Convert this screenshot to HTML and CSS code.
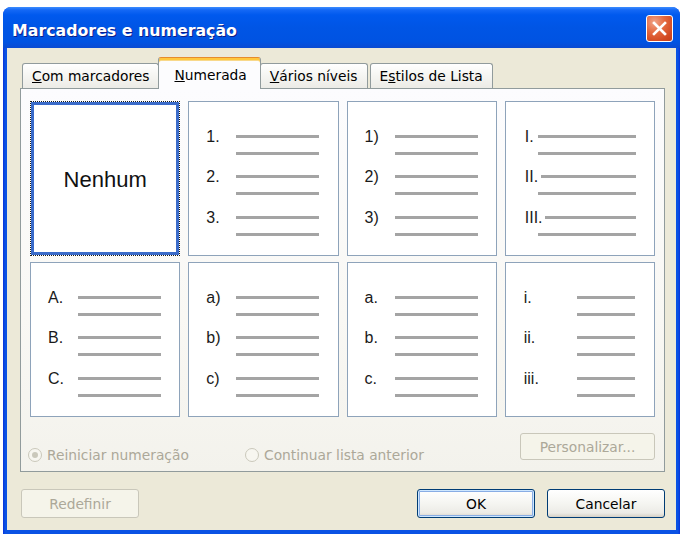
FILE: index.html
```html
<!DOCTYPE html>
<html lang="pt">
<head>
<meta charset="utf-8">
<title>Marcadores e numeração</title>
<link rel="stylesheet" href="styles.css">
</head>
<body>
<div class="window">
  <div class="titlebar">
    <span class="title">Marcadores e numeração</span>
    <div class="close">
      <svg width="25" height="25" viewBox="0 0 25 25"><path d="M7 7 L18 18 M18 7 L7 18" stroke="#fff" stroke-width="2.6" stroke-linecap="square" fill="none"/></svg>
    </div>
  </div>
  <div class="client">
    <div class="tabs">
      <div class="tab"><u>C</u>om marcadores</div>
      <div class="tab active"><u>N</u>umerada</div>
      <div class="tab"><u>V</u>ários níveis</div>
      <div class="tab">E<u>s</u>tilos de Lista</div>
    </div>
    <div class="panel">
      <div class="grid">
        <div class="cell selected"><span class="none">Nenhum</span></div>

        <div class="cell list">
          <div class="item"><span class="num">1.</span><div class="lines"><i></i><i></i></div></div>
          <div class="item"><span class="num">2.</span><div class="lines"><i></i><i></i></div></div>
          <div class="item"><span class="num">3.</span><div class="lines"><i></i><i></i></div></div>
        </div>

        <div class="cell list">
          <div class="item"><span class="num">1)</span><div class="lines"><i></i><i></i></div></div>
          <div class="item"><span class="num">2)</span><div class="lines"><i></i><i></i></div></div>
          <div class="item"><span class="num">3)</span><div class="lines"><i></i><i></i></div></div>
        </div>

        <div class="cell list roman">
          <div class="item"><span class="num">I.</span><div class="lines"><i></i><i></i></div></div>
          <div class="item r2"><span class="num">II.</span><div class="lines"><i></i><i></i></div></div>
          <div class="item r3"><span class="num">III.</span><div class="lines"><i></i><i></i></div></div>
        </div>

        <div class="cell list">
          <div class="item"><span class="num">A.</span><div class="lines"><i></i><i></i></div></div>
          <div class="item"><span class="num">B.</span><div class="lines"><i></i><i></i></div></div>
          <div class="item"><span class="num">C.</span><div class="lines"><i></i><i></i></div></div>
        </div>

        <div class="cell list">
          <div class="item"><span class="num">a)</span><div class="lines"><i></i><i></i></div></div>
          <div class="item"><span class="num">b)</span><div class="lines"><i></i><i></i></div></div>
          <div class="item"><span class="num">c)</span><div class="lines"><i></i><i></i></div></div>
        </div>

        <div class="cell list">
          <div class="item"><span class="num">a.</span><div class="lines"><i></i><i></i></div></div>
          <div class="item"><span class="num">b.</span><div class="lines"><i></i><i></i></div></div>
          <div class="item"><span class="num">c.</span><div class="lines"><i></i><i></i></div></div>
        </div>

        <div class="cell list lroman">
          <div class="item"><span class="num">i.</span><div class="lines"><i></i><i></i></div></div>
          <div class="item"><span class="num">ii.</span><div class="lines"><i></i><i></i></div></div>
          <div class="item"><span class="num">iii.</span><div class="lines"><i></i><i></i></div></div>
        </div>
      </div>

      <div class="options">
        <div class="radio first"><span class="dot checked"></span><span>Reiniciar numeração</span></div>
        <div class="radio"><span class="dot"></span><span>Continuar lista anterior</span></div>
        <div class="btn disabled custom">Personalizar...</div>
      </div>
    </div>

    <div class="footer">
      <div class="btn disabled">Redefinir</div>
      <div class="spacer"></div>
      <div class="btn default">OK</div>
      <div class="btn">Cancelar</div>
    </div>
  </div>
</div>
</body>
</html>
```

FILE: styles.css
```css
* { box-sizing: border-box; }

body {
  margin: 0;
  background: #ffffff;
  font-family: "DejaVu Sans", Verdana, sans-serif;
  font-size: 13.8px;
  color: #000;
}

.window {
  margin: 7px 0 0 3px;
  width: 677px;
  height: 527px;
  border-radius: 8px 8px 0 0;
  background: linear-gradient(to right, #0831d9 0, #0a52e4 2px, #0a52e4 675px, #0831d9 677px);
  display: flex;
  flex-direction: column;
}

.titlebar {
  height: 41px;
  flex: none;
  border-radius: 8px 8px 0 0;
  background: linear-gradient(to bottom, #3d8dff 0, #1468f5 3px, #0059ee 8px, #0055e5 50%, #0053e2 85%, #0a4ad2 100%);
  display: flex;
  align-items: center;
  justify-content: space-between;
  padding: 0 7px 0 9px;
}

.title {
  font-family: "DejaVu Sans", Verdana, sans-serif;
  font-weight: bold;
  font-size: 15.8px;
  color: #ffffff;
  text-shadow: 1px 1px 0 #0a1d8a;
  margin-top: 5px;
}

.close {
  width: 27px;
  height: 27px;
  margin-top: 1px;
  border: 1px solid #ffffff;
  border-radius: 3px;
  background: radial-gradient(circle at 30% 25%, #f0a48a 0, #e4693f 40%, #d24a22 75%, #c43e18 100%);
  display: flex;
  align-items: center;
  justify-content: center;
}

.close svg { display: block; }

.client {
  flex: 1;
  margin: 0 4px 4px 4px;
  background: #ece9d8;
  padding: 10px 11px 0 13px;
}

/* Tabs */
.tabs {
  display: flex;
  align-items: flex-end;
  height: 31px;
  padding-left: 2px;
  margin-bottom: -1px;
  position: relative;
  z-index: 2;
}

.tab {
  height: 25px;
  margin-bottom: 1px;
  padding: 0 9px;
  border: 1px solid #919b9c;
  border-bottom: none;
  border-radius: 3px 3px 0 0;
  background: linear-gradient(to bottom, #ffffff 0, #f7f7f4 40%, #ecebe6 100%);
  display: flex;
  align-items: center;
  white-space: nowrap;
}

.tab.active {
  height: 32px;
  margin: 0 -1px 0 -1px;
  padding: 2px 13px 0 15px;
  background: #fcfcfe;
  border-top: 1px solid #e68b2c;
  box-shadow: inset 0 2px 0 #ffc73c, inset 0 3px 0 #f8d88a;
  position: relative;
  z-index: 3;
}

.tab:last-child { margin-left: 2px; }

/* Panel */
.panel {
  height: 384px;
  border: 1px solid #919b9c;
  background: linear-gradient(to bottom, #fcfcfe 0, #f9f8f4 60%, #f3f2ec 100%);
  padding: 12px 9px 0 9px;
  position: relative;
  z-index: 1;
}

.grid {
  display: grid;
  grid-template-columns: repeat(4, 1fr);
  grid-auto-rows: 155px;
  gap: 6px 8px;
}

.cell {
  background: #ffffff;
  border: 1px solid #8ea3ba;
}

.cell.selected {
  border: 1px dotted #1a1a1a;
  box-shadow: inset 0 0 0 3px #3a6bc9;
  display: flex;
  align-items: center;
  justify-content: center;
}

.none {
  font-family: "Liberation Sans", Arial, sans-serif;
  font-size: 22px;
  color: #111;
  margin-top: 2px;
}

.list {
  padding: 32.5px 0 0 17px;
  display: flex;
  flex-direction: column;
  gap: 20.5px;
}

.item {
  display: flex;
  align-items: flex-start;
}

.num {
  width: 30px;
  height: 3px;
  line-height: 3px;
  font-family: "Liberation Sans", Arial, sans-serif;
  font-size: 16px;
  color: #1a1a1a;
  white-space: nowrap;
}

.lines {
  width: 83px;
  display: flex;
  flex-direction: column;
  gap: 14px;
}

.lines i {
  display: block;
  height: 3px;
  background: #a4a4a4;
}

.roman { padding-left: 19px; }
.roman .num { width: 13px; }
.roman .lines { width: 98px; }
.roman .r2 .lines i:first-child { margin-left: 3px; }
.roman .r3 .lines i:first-child { margin-left: 7px; }

.lroman { padding-left: 18px; }
.lroman .num { width: 53px; }
.lroman .lines { width: 58px; }

/* Options row */
.options {
  display: flex;
  align-items: flex-start;
  margin-top: 16px;
  height: 27px;
}

.radio {
  display: flex;
  align-items: center;
  gap: 5px;
  height: 16px;
  margin-top: 14px;
  color: #aca899;
  white-space: nowrap;
}

.radio.first {
  width: 217px;
  margin-left: -2px;
}

.dot {
  width: 14px;
  height: 14px;
  border: 1px solid #cac8bb;
  border-radius: 50%;
  background: #f7f6f0;
  display: flex;
  align-items: center;
  justify-content: center;
  flex: none;
}

.dot.checked::after {
  content: "";
  width: 6px;
  height: 6px;
  border-radius: 50%;
  background: #cac8bb;
}

/* Buttons */
.btn {
  height: 29px;
  width: 118px;
  border: 1px solid #003c74;
  border-radius: 3px;
  background: linear-gradient(to bottom, #ffffff 0, #f5f5f1 50%, #ecebe6 85%, #d6d0c5 100%);
  display: flex;
  align-items: center;
  justify-content: center;
  white-space: nowrap;
}

.btn.default {
  box-shadow: inset 0 0 0 1px #cee7ff, inset 0 0 0 2px #89ade4;
}

.btn.disabled {
  border-color: #c9c7ba;
  background: #f5f4ea;
  color: #aca899;
}

.btn.custom {
  margin-left: auto;
  width: 135px;
  height: 27px;
}

.footer {
  display: flex;
  margin-top: 17px;
  padding-left: 1px;
  gap: 12px;
}

.spacer { flex: 1; }
```
